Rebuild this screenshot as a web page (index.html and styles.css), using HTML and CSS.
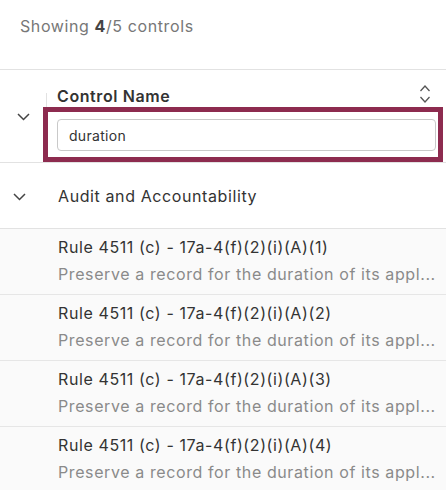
FILE: index.html
```html
<!DOCTYPE html>
<html>
<head>
<meta charset="utf-8">
<link rel="stylesheet" href="styles.css">
</head>
<body>
<div class="summary">Showing <b>4</b>/5 controls</div>
<div class="header-row">
  <div class="expander header-expander">
    <svg width="13" height="8" viewBox="0 0 13 8"><path d="M1 1l5.5 5.5L12 1" fill="none" stroke="#444" stroke-width="1.5"/></svg>
  </div>
  <div class="header-cell">
    <div class="title-row">
      <span class="divider"></span>
      <span class="col-title">Control Name</span>
      <svg class="sort" width="12" height="20" viewBox="0 0 12 20"><path d="M1.5 7l4.5-5 4.5 5M1.5 13l4.5 5 4.5-5" fill="none" stroke="#555" stroke-width="1.3"/></svg>
    </div>
    <div class="filter-box">
      <input class="filter-input" type="text" value="duration">
    </div>
  </div>
</div>
<div class="group-row">
  <div class="expander group-expander">
    <svg width="13" height="8" viewBox="0 0 13 8"><path d="M1 1l5.5 5.5L12 1" fill="none" stroke="#444" stroke-width="1.5"/></svg>
  </div>
  <div class="group-name">Audit and Accountability</div>
</div>
<div class="item">
  <div class="item-title">Rule 4511 (c) - 17a-4(f)(2)(i)(A)(1)</div>
  <div class="item-desc">Preserve a record for the duration of its appl...</div>
</div>
<div class="item">
  <div class="item-title">Rule 4511 (c) - 17a-4(f)(2)(i)(A)(2)</div>
  <div class="item-desc">Preserve a record for the duration of its appl...</div>
</div>
<div class="item">
  <div class="item-title">Rule 4511 (c) - 17a-4(f)(2)(i)(A)(3)</div>
  <div class="item-desc">Preserve a record for the duration of its appl...</div>
</div>
<div class="item">
  <div class="item-title">Rule 4511 (c) - 17a-4(f)(2)(i)(A)(4)</div>
  <div class="item-desc">Preserve a record for the duration of its appl...</div>
</div>
</body>
</html>
```
FILE: styles.css
```css
* { box-sizing: border-box; }
html, body { margin: 0; padding: 0; background: #fff; }
body {
  font-family: Inter, "Noto Sans", sans-serif;
  font-size: 16px;
  letter-spacing: 0.6px;
  color: #333;
  width: 446px;
  overflow: hidden;
}
.summary {
  height: 70px;
  padding: 16px 0 0 20px;
  line-height: 20px;
  color: #777;
  border-bottom: 1px solid #e2e2e2;
}
.summary b { color: #444; font-weight: 700; }

.header-row {
  display: flex;
  border-bottom: 1px solid #e2e2e2;
}
.expander { display: flex; justify-content: center; }
.header-expander { width: 43px; padding-top: 43px; padding-left: 4px; }
.header-cell { flex: 1; display: flex; flex-direction: column; }
.title-row {
  display: flex;
  height: 37px;
  padding-top: 16px;
  align-items: flex-start;
}
.divider {
  width: 1px;
  height: 14px;
  margin-left: 3px;
  margin-top: 7px;
  background: #e2e2e2;
}
.col-title {
  margin-left: 10px;
  font-weight: 600;
  line-height: 20px;
  color: #333;
  flex: 1;
}
.sort { margin-right: 15px; margin-top: -2px; }
.filter-box {
  width: 400px;
  height: 55px;
  border: 5px solid #8d2b4f;
  padding: 7px 2px 0 9px;
}
.filter-input {
  display: block;
  width: 379px;
  height: 32px;
  border: 1px solid #c9c9c9;
  border-radius: 4px;
  padding: 0 0 0 11px;
  font-family: Inter, "Noto Sans", sans-serif;
  font-size: 14px;
  letter-spacing: 0.3px;
  color: #333;
  background: #fff;
  outline: none;
}

.group-row {
  display: flex;
  align-items: center;
  height: 66px;
  border-bottom: 1px solid #e2e2e2;
}
.group-expander { width: 38px; padding-top: 2px; }
.group-name { margin-left: 20px; line-height: 20px; color: #333; }

.item {
  height: 66px;
  background: #fafafa;
  border-bottom: 1px solid #e6e6e6;
  padding: 8px 0 0 58px;
}
.item-title { line-height: 20px; color: #333; }
.item-desc {
  margin-top: 7px;
  line-height: 20px;
  color: #8a8a8a;
  white-space: nowrap;
}
```
